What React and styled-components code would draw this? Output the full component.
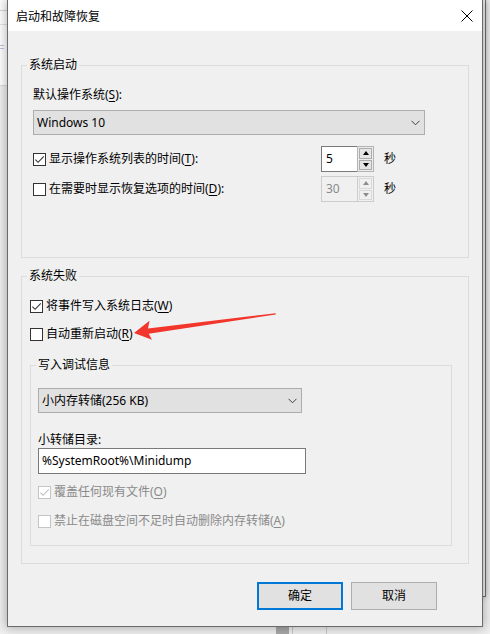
import React from 'react';
import styled, { createGlobalStyle } from 'styled-components';

const GlobalStyle = createGlobalStyle`
  html, body { margin: 0; padding: 0; }
  body {
    background: #f0f0f0;
    font-family: "Noto Sans", "Noto Sans CJK SC", sans-serif;
    font-size: 12px;
    color: #000;
  }
  * { box-sizing: border-box; }
`;

const Desktop = styled.div`
  position: relative;
  width: 490px;
  height: 634px;
  overflow: hidden;
  background: #f0f0f0;
  padding-left: 7px;
  display: flex;
  align-items: flex-start;
`;

const BackSheet = styled.div`
  position: absolute;
  left: 0;
  top: 0;
  width: 10px;
  height: 86px;
  background: #fff;
  border-bottom: 1px solid #dcdcdc;
  background-image: linear-gradient(#d6d6d6, #d6d6d6), linear-gradient(#e3e3e3, #e3e3e3),
    linear-gradient(#b9c7dc, #b9c7dc), linear-gradient(#b9c7dc, #b9c7dc);
  background-size: 10px 1px, 10px 1px, 4px 1px, 4px 1px;
  background-position: 0 10px, 0 24px, 0 45px, 0 48px;
  background-repeat: no-repeat;
`;

const BackWindow = styled.div`
  position: absolute;
  left: 420px;
  top: 0;
  width: 66px;
  height: 597px;
  background: #f0f0f0;
  border-right: 1px solid #6f6f6f;
  border-bottom: 1px solid #6f6f6f;
  box-shadow: 0 0 6px rgba(0, 0, 0, 0.25);
`;

const BackScroll = styled.div`
  position: absolute;
  left: 276px;
  top: 627px;
  width: 13px;
  height: 7px;
  background: #a9a9a9;
  box-shadow: 3px 0 0 #f0f0f0, 4px 0 0 #c9c9c9, 37px 0 0 #f0f0f0, 38px 0 0 #c9c9c9;
`;

const Dialog = styled.div`
  position: relative;
  z-index: 2;
  width: 476px;
  height: 627px;
  background: #f0f0f0;
  border: 1px solid #6b6b6b;
  border-top: none;
  box-shadow: 0 0 10px 1px rgba(0, 0, 0, 0.3);
  display: flex;
  flex-direction: column;
`;

const TitleBar = styled.div`
  height: 31px;
  flex: none;
  background: #fff;
  display: flex;
  align-items: center;
  justify-content: space-between;
  padding: 0 9px 0 8px;
`;

const Title = styled.span`
  font-family: "Noto Sans CJK SC", sans-serif;
  font-size: 12px;
  line-height: 16px;
  color: #000;
`;

const CloseButton = styled.span`
  display: flex;
  width: 12px;
  height: 12px;
  align-items: center;
  justify-content: center;
`;

const Body = styled.div`
  flex: 1;
  display: flex;
  flex-direction: column;
  padding: 26px 13px 0 13px;
`;

const Group = styled.fieldset`
  margin: ${(p) => p.$mt || 0}px 0 0 0;
  padding: 0;
  border: 1px solid #dcdcdc;
  min-width: 0;
`;

const Legend = styled.legend`
  margin-left: 5px;
  padding: 0 2px;
  font-size: 12px;
  line-height: 16px;
  color: #000;
`;

const GroupContent = styled.div`
  display: flex;
  flex-direction: column;
  align-items: flex-start;
  padding: ${(p) => p.$pt}px ${(p) => p.$pr || 0}px ${(p) => p.$pb}px ${(p) => p.$pl}px;
`;

const FieldLabel = styled.div`
  line-height: 16px;
  margin-top: ${(p) => p.$mt || 0}px;
  color: #000;
`;

const Key = styled.u`
  text-underline-offset: 2px;
  text-decoration-thickness: 1px;
`;

const SelectBox = styled.div`
  margin-top: ${(p) => p.$mt || 0}px;
  width: ${(p) => p.$w}px;
  height: 25px;
  background: #e1e1e1;
  border: 1px solid #adadad;
  display: flex;
  align-items: center;
  justify-content: space-between;
  padding: 0 4px 0 3px;
  line-height: 16px;
`;

const TextInput = styled.div`
  width: ${(p) => p.$w}px;
  height: 26px;
  background: #fff;
  border: 1px solid #7a7a7a;
  display: flex;
  align-items: center;
  padding-left: 3px;
  line-height: 16px;
`;

const Row = styled.div`
  display: flex;
  align-items: center;
  height: ${(p) => p.$h || 16}px;
  margin-top: ${(p) => p.$mt || 0}px;
`;

const CheckLabel = styled.label`
  display: flex;
  align-items: center;
  width: ${(p) => (p.$w ? `${p.$w}px` : 'auto')};
  line-height: 16px;
  color: ${(p) => (p.$disabled ? '#8a8a8a' : '#000')};
`;

const Box = styled.span`
  width: 13px;
  height: 13px;
  flex: none;
  border: 1px solid ${(p) => (p.$disabled ? '#c4c4c4' : '#333333')};
  background: #fff;
  display: flex;
  align-items: center;
  justify-content: center;
  margin-right: 3px;
`;

const Spinner = styled.div`
  display: flex;
  width: 53px;
  height: 26px;
`;

const SpinField = styled.div`
  width: 36px;
  height: 100%;
  border: 1px solid ${(p) => (p.$disabled ? '#cccccc' : '#7a7a7a')};
  border-right: none;
  background: ${(p) => (p.$disabled ? '#f0f0f0' : '#fff')};
  color: ${(p) => (p.$disabled ? '#8a8a8a' : '#000')};
  display: flex;
  align-items: center;
  padding-left: 4px;
  line-height: 16px;
`;

const SpinButtons = styled.div`
  flex: 1;
  display: flex;
  flex-direction: column;
  gap: 1px;
  padding: 1px;
  border: 1px solid ${(p) => (p.$disabled ? '#cccccc' : '#b4b4b4')};
  background: ${(p) => (p.$disabled ? '#f0f0f0' : '#ececec')};
`;

const SpinBtn = styled.div`
  flex: 1;
  border: 1px solid ${(p) => (p.$disabled ? '#d9d9d9' : '#adadad')};
  background: ${(p) => (p.$disabled ? '#f0f0f0' : '#e5e5e5')};
  display: flex;
  align-items: center;
  justify-content: center;
`;

const Tri = styled.span`
  width: 0;
  height: 0;
  border-left: 3.5px solid transparent;
  border-right: 3.5px solid transparent;
  ${(p) => (p.$down ? 'border-top' : 'border-bottom')}: 4px solid ${(p) => (p.$disabled ? '#8c8c8c' : '#000')};
`;

const Unit = styled.span`
  margin-left: 10px;
  line-height: 16px;
`;

const ButtonRow = styled.div`
  display: flex;
  justify-content: flex-end;
  gap: 8px;
  margin-top: 18px;
  padding-right: 32px;
`;

const Button = styled.div`
  width: 86px;
  height: 28px;
  background: #e1e1e1;
  border: ${(p) => (p.$primary ? '2px solid #0078d7' : '1px solid #adadad')};
  display: flex;
  align-items: center;
  justify-content: center;
  line-height: 16px;
`;

const ArrowLayer = styled.svg`
  position: absolute;
  left: 0;
  top: 0;
  z-index: 5;
  pointer-events: none;
`;

const Chevron = () => (
  <svg width="9" height="6" viewBox="0 0 9 6">
    <path d="M0.5 0.8 L4.5 4.8 L8.5 0.8" fill="none" stroke="#404040" strokeWidth="1" />
  </svg>
);

const CheckBox = ({ checked, disabled }) => (
  <Box $disabled={disabled}>
    {checked && (
      <svg width="11" height="11" viewBox="0 0 11 11">
        <path
          d="M1.4 5.6 L4.1 8.3 L9.8 2.4"
          fill="none"
          stroke={disabled ? '#bdbdbd' : '#333'}
          strokeWidth="1.1"
        />
      </svg>
    )}
  </Box>
);

const Spin = ({ value, disabled }) => (
  <Spinner>
    <SpinField $disabled={disabled}>{value}</SpinField>
    <SpinButtons $disabled={disabled}>
      <SpinBtn $disabled={disabled}>
        <Tri $disabled={disabled} />
      </SpinBtn>
      <SpinBtn $disabled={disabled}>
        <Tri $down $disabled={disabled} />
      </SpinBtn>
    </SpinButtons>
  </Spinner>
);

export default function App() {
  return (
    <>
      <GlobalStyle />
      <Desktop>
        <BackSheet />
        <BackWindow />
        <BackScroll />
        <Dialog>
          <TitleBar>
            <Title>启动和故障恢复</Title>
            <CloseButton>
              <svg width="12" height="12" viewBox="0 0 12 12">
                <path d="M0.5 0.5 L11.5 11.5 M11.5 0.5 L0.5 11.5" stroke="#000" strokeWidth="1" />
              </svg>
            </CloseButton>
          </TitleBar>
          <Body>
            <Group>
              <Legend>系统启动</Legend>
              <GroupContent $pt={14} $pl={11} $pb={55}>
                <FieldLabel>
                  默认操作系统(<Key>S</Key>):
                </FieldLabel>
                <SelectBox $w={392} $mt={7}>
                  <span>Windows 10</span>
                  <Chevron />
                </SelectBox>
                <Row $h={26} $mt={11}>
                  <CheckLabel $w={288}>
                    <CheckBox checked />
                    显示操作系统列表的时间(<Key>T</Key>):
                  </CheckLabel>
                  <Spin value="5" />
                  <Unit>秒</Unit>
                </Row>
                <Row $h={26} $mt={4}>
                  <CheckLabel $w={288}>
                    <CheckBox />
                    在需要时显示恢复选项的时间(<Key>D</Key>):
                  </CheckLabel>
                  <Spin value="30" disabled />
                  <Unit>秒</Unit>
                </Row>
              </GroupContent>
            </Group>

            <Group $mt={10}>
              <Legend>系统失败</Legend>
              <GroupContent $pt={14} $pl={8} $pr={16} $pb={17}>
                <Row>
                  <CheckLabel>
                    <CheckBox checked />
                    将事件写入系统日志(<Key>W</Key>)
                  </CheckLabel>
                </Row>
                <Row $mt={12}>
                  <CheckLabel>
                    <CheckBox />
                    自动重新启动(<Key>R</Key>)
                  </CheckLabel>
                </Row>
                <Group $mt={15} style={{ alignSelf: 'stretch' }}>
                  <Legend>写入调试信息</Legend>
                  <GroupContent $pt={15} $pl={7} $pb={16}>
                    <SelectBox $w={264}>
                      <span>小内存转储(256 KB)</span>
                      <Chevron />
                    </SelectBox>
                    <FieldLabel $mt={19}>小转储目录:</FieldLabel>
                    <TextInput $w={268}>%SystemRoot%\Minidump</TextInput>
                    <Row $mt={10}>
                      <CheckLabel $disabled>
                        <CheckBox checked disabled />
                        覆盖任何现有文件(<Key>O</Key>)
                      </CheckLabel>
                    </Row>
                    <Row $mt={13}>
                      <CheckLabel $disabled>
                        <CheckBox disabled />
                        禁止在磁盘空间不足时自动删除内存转储(<Key>A</Key>)
                      </CheckLabel>
                    </Row>
                  </GroupContent>
                </Group>
              </GroupContent>
            </Group>

            <ButtonRow>
              <Button $primary>确定</Button>
              <Button>取消</Button>
            </ButtonRow>
          </Body>
        </Dialog>
        <ArrowLayer width="490" height="634" viewBox="0 0 490 634">
          <g transform="translate(134 333) rotate(-7.7)">
            <path
              d="M0 0 L17 -10 L14.5 -2.6 L143 -0.6 L143 0.6 L14.5 2.6 L17 9 Z"
              fill="#f2362c"
            />
          </g>
        </ArrowLayer>
      </Desktop>
    </>
  );
}
